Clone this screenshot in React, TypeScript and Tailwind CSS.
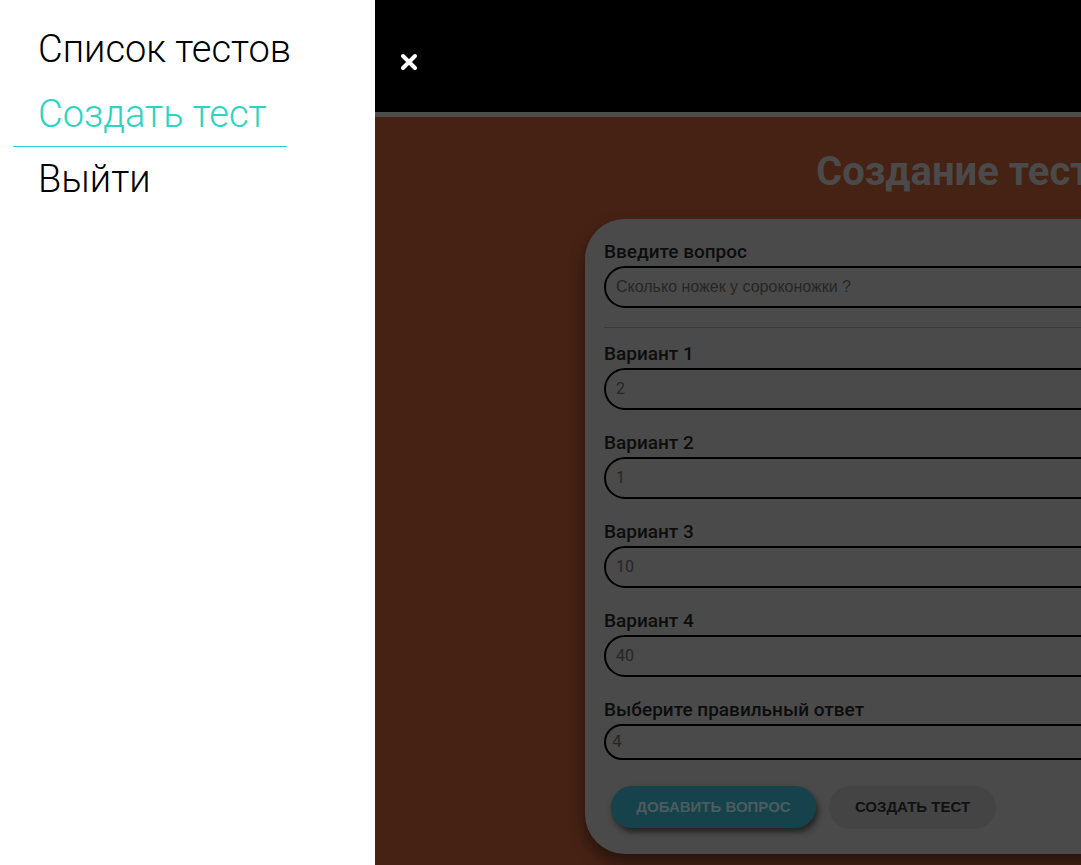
import React from "react";

const exo = { fontFamily: "Roboto, 'Noto Sans', sans-serif" };
const arial = { fontFamily: "'Liberation Sans', Arial, sans-serif" };

const menu = [
  { label: "Список тестов", active: false },
  { label: "Создать тест", active: true },
  { label: "Выйти", active: false },
];

const variants = [
  { label: "Вариант 1", value: "2" },
  { label: "Вариант 2", value: "1" },
  { label: "Вариант 3", value: "10" },
  { label: "Вариант 4", value: "40" },
];

function Field({ label, value, font }: { label: string; value: string; font?: React.CSSProperties }) {
  return (
    <div className="mb-[21px]">
      <label className="mb-[2px] block h-6 text-[19px] font-medium leading-6 text-[#0d0d0d]" style={exo}>
        {label}
      </label>
      <div
        className="flex h-[42px] items-center rounded-full border-2 border-black px-[10px] text-[16px] text-[#262626]"
        style={font ?? exo}
      >
        {value}
      </div>
    </div>
  );
}

export default function App() {
  return (
    <div className="flex h-[865px] w-[1081px] overflow-hidden">
      <aside className="w-[375px] shrink-0 bg-white pt-[17px]" style={exo}>
        {menu.map((item) => (
          <div
            key={item.label}
            className={
              "ml-[13px] h-[65px] w-[274px] whitespace-nowrap pl-[25px] text-[38px] font-light leading-[64px] " +
              (item.active ? "border-b border-[#2ad5c1] text-[#2ad5c1]" : "text-black")
            }
          >
            {item.label}
          </div>
        ))}
      </aside>

      <main className="relative flex-1 overflow-hidden bg-[#462214]">
        <header className="h-[112px] bg-black pl-[25px] pt-[53px]">
          <svg width="18" height="18" viewBox="0 0 18 18">
            <path d="M3 3L15 15M15 3L3 15" stroke="white" strokeWidth="4" strokeLinecap="round" />
          </svg>
        </header>
        <div className="h-[5px] bg-[#4d4d4d]" />

        <div className="w-[1081px]">
          <h1
            className="mt-[31px] mb-[23px] whitespace-nowrap pl-[441px] text-[40px] font-bold leading-[48px] text-[#4a4a4a]"
            style={exo}
          >
            Создание теста
          </h1>

          <div className="ml-[210px] w-[661px] rounded-[40px] bg-[#4a4a4a] px-[19px] pt-[21px] pb-[25px] shadow-[0_8px_16px_rgba(0,0,0,0.45)]">
            <div>
              <label className="mb-[2px] block h-6 text-[19px] font-medium leading-6 text-[#0d0d0d]" style={exo}>
                Введите вопрос
              </label>
              <div
                className="flex h-[42px] items-center rounded-full border-2 border-black px-[10px] text-[16px] text-[#262626]"
                style={arial}
              >
                Сколько ножек у сороконожки ?
              </div>
            </div>
            <div className="mt-[19px] mb-[14px] h-px bg-[#3a3a3a]" />

            {variants.map((v) => (
              <Field key={v.label} label={v.label} value={v.value} />
            ))}

            <div>
              <label className="mb-[2px] block h-6 text-[19px] font-medium leading-6 text-[#0d0d0d]" style={exo}>
                Выберите правильный ответ
              </label>
              <div
                className="flex h-[36px] items-center rounded-full border-2 border-black px-[6px] text-[16px] text-[#262626]"
                style={{ fontFamily: "'DejaVu Sans', sans-serif" }}
              >
                4
              </div>
            </div>

            <div className="mt-[26px] flex gap-[13px] pl-[7px]" style={arial}>
              <button className="h-[42px] w-[205px] rounded-full bg-[#16434b] text-[15px] font-bold text-[#4d5b5e] shadow-[2px_4px_6px_rgba(0,0,0,0.55)]">
                ДОБАВИТЬ ВОПРОС
              </button>
              <button className="h-[43px] w-[167px] rounded-full bg-[#444444] text-[15px] font-bold text-[#111]">
                СОЗДАТЬ ТЕСТ
              </button>
            </div>
          </div>
        </div>
      </main>
    </div>
  );
}
